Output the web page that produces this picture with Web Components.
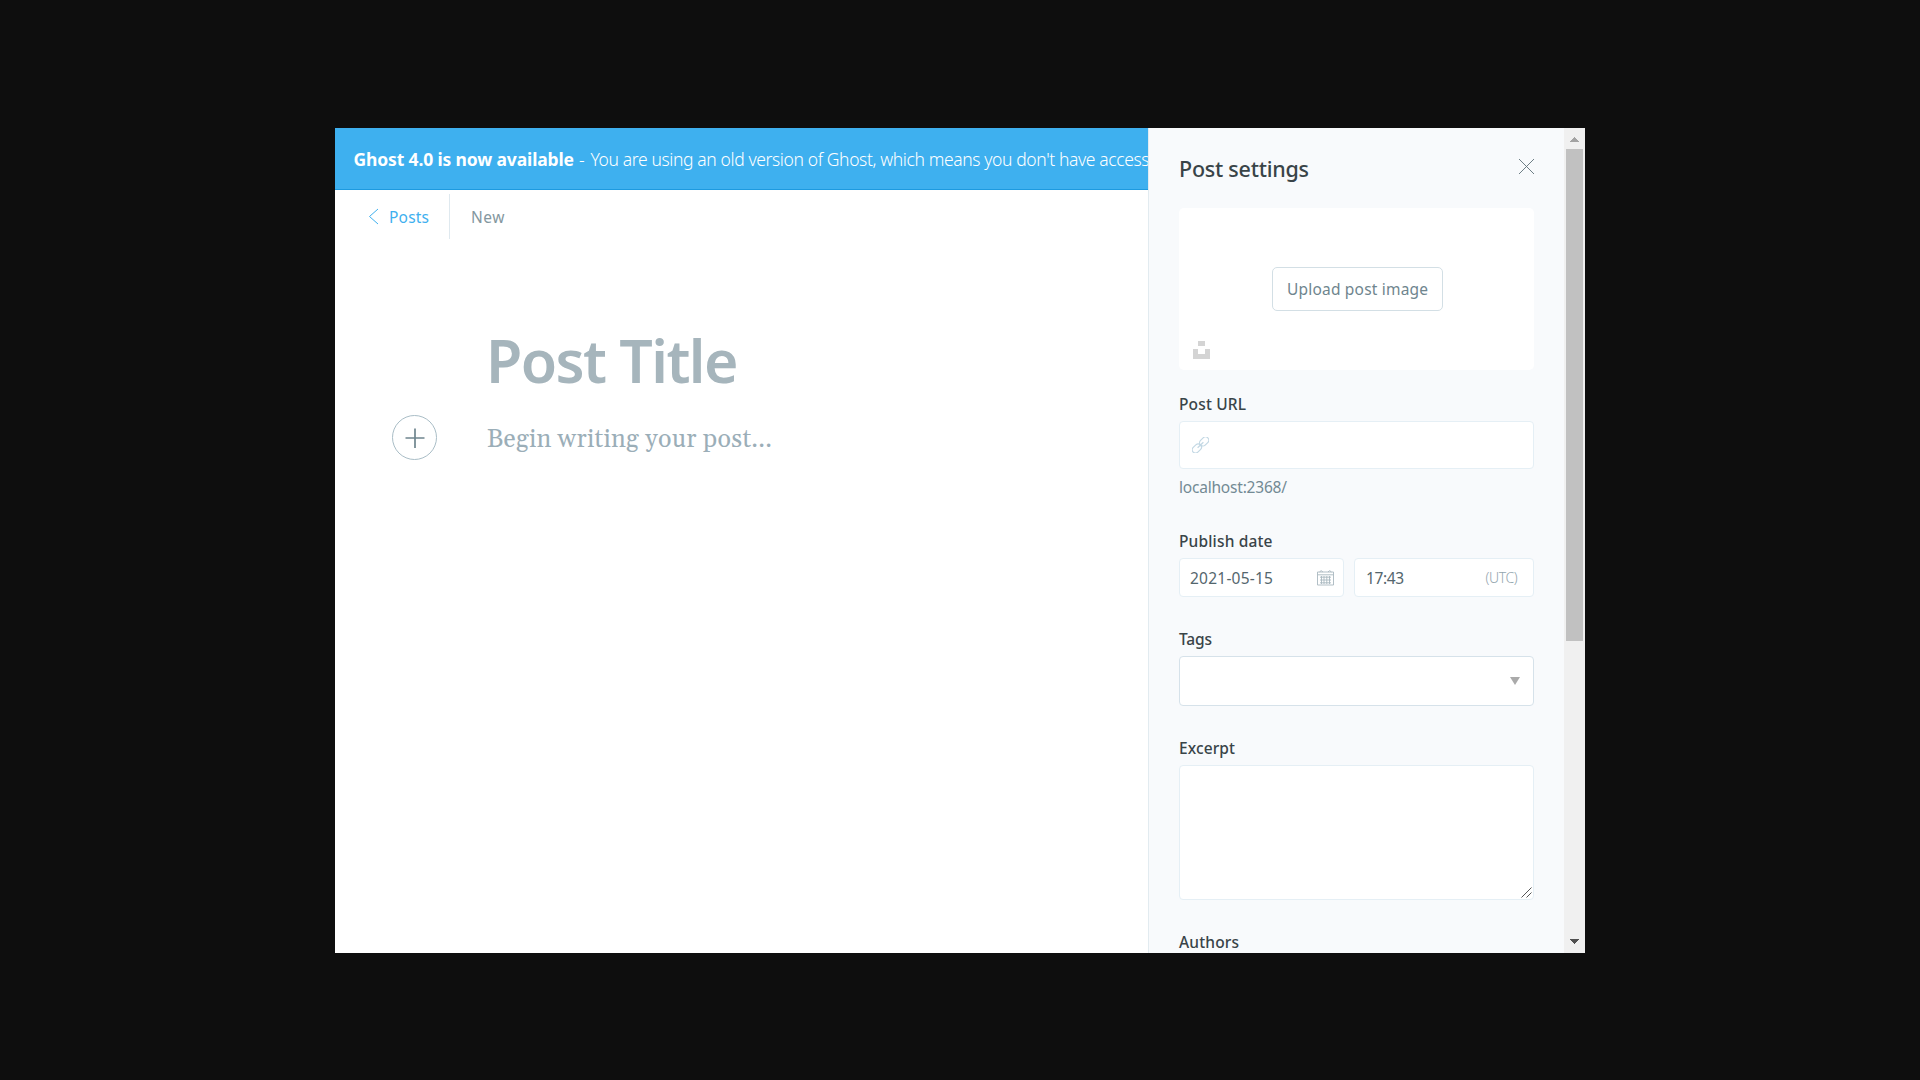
<!DOCTYPE html>
<html lang="en"><head><meta charset="utf-8"><title>New post</title>
<style>
html,body{margin:0;height:100%;background:#0e0e0e;overflow:hidden}
body{font-family:"Noto Sans","Open Sans",sans-serif;color:#394448}
</style></head><body>
<ghost-app></ghost-app>
<script>
const define=(name,html,after)=>{const t=document.createElement('template');t.innerHTML=html;
customElements.define(name,class extends HTMLElement{
  connectedCallback(){ if(this.shadowRoot)return; this.attachShadow({mode:'open'}).append(t.content.cloneNode(true)); if(after)after(this);} });};

/* One line of text, tracked so that it takes the given width. */
define('fit-text',`<style>:host{display:block;white-space:nowrap;flex:none}span{display:inline-block}</style><span><slot></slot></span>`,el=>{
  const s=el.shadowRoot.querySelector('span'),w=+el.getAttribute('width'),n=el.textContent.length;
  if(n>1)s.style.letterSpacing=((w-s.getBoundingClientRect().width)/(n-1)).toFixed(3)+'px';
});

define('notice-bar',`<style>
:host{display:flex;box-sizing:border-box;height:62px;background:#3eb0ef;border-bottom:1px solid #1d9ae0;color:#fff;padding:0 0 0 18.5px;font-size:17.5px;line-height:62px;overflow:hidden}
.b{font-weight:700;width:225.5px}.l{font-weight:300}.d{width:11.5px}
</style><fit-text class="b" width="220.5">Ghost 4.0 is now available</fit-text><fit-text class="l d" width="6">-</fit-text><fit-text class="l" width="559">You are using an old version of Ghost, which means you don't have access</fit-text>`);

define('editor-nav',`<style>
:host{display:flex;height:49px;padding-top:4px;box-sizing:border-box;font-size:15.5px;line-height:46px;color:#8497a0}
.back{display:flex;width:115px;box-sizing:border-box;padding-left:33px;height:45px;border-right:1px solid #dfe9ef;color:#3eb0ef}
svg{margin:14px 10px 0 0;flex:none}.new{margin-left:21px}
</style><div class="back"><svg width="11" height="17" viewBox="0 0 11 17" fill="none" stroke="#3eb0ef" stroke-width="1"><path d="M10 1 1.5 8.5 10 16"/></svg><fit-text width="40">Posts</fit-text></div><fit-text class="new" width="33.5">New</fit-text>`);

define('post-editor',`<style>
:host{display:block;padding-top:81px}
.title{font-size:59px;font-weight:600;line-height:80px;color:#a6b5bc;padding-left:151px}
.row{display:flex;align-items:center;height:46px;margin-top:14px;padding-left:57px;gap:50px}
.body{font:25px/46px Georgia,Gelasio,"Noto Serif","Liberation Serif",serif;color:#9baeb8;padding-top:5px}
svg{flex:none}
</style><fit-text class="title" width="252.5">Post Title</fit-text>
<div class="row"><svg width="45" height="45" viewBox="0 0 45 45" fill="none"><circle cx="22.5" cy="22.5" r="22" stroke="#a9bdc6"/><path d="M13.5 23h19M23 13.5v19.5" stroke="#6f858e" stroke-width="1.7"/></svg><fit-text class="body" width="285">Begin writing your post...</fit-text></div>`);

define('image-uploader',`<style>
:host{display:flex;width:355px;height:162px;background:#fff;border-radius:5px;box-sizing:border-box;padding:59px 0 0 93px;position:relative}
button{all:unset;box-sizing:border-box;width:171px;height:44px;border:1px solid #d3dfe5;border-radius:5px;padding-left:14px;font-size:15.5px;line-height:43px;color:#6f858e}
svg{position:absolute;left:14px;top:133px}
</style><button><fit-text width="141">Upload post image</fit-text></button><svg width="17" height="18" fill="#d4d4d4"><path d="M5 0h7v5H5zM0 8h5v5h7V8h5v10H0z"/></svg>`);

define('form-field',`<style>
:host{display:block}
.c{margin-top:7px;display:flex;gap:10px}
</style><slot name="label"></slot><div class="c"><slot></slot></div>`);

define('input-box',`<style>
:host{display:flex;box-sizing:border-box;background:#fff;border:1px solid #e5eff5;border-radius:4px;width:355px;font-size:15.5px;color:#54666d}
</style><slot></slot>`);

define('settings-panel',`<style>
:host{display:block;box-sizing:border-box;width:416px;height:825px;overflow:hidden;background:#f8fafc;border-left:1px solid #e2ebf0;padding:0 0 0 30px}
header{display:flex;height:80px;width:355px;justify-content:space-between}
.h{font-size:21.5px;font-weight:500;line-height:30px;padding-top:26px}
header svg{margin:31px 0 0}
.label{font-size:15.5px;font-weight:500;line-height:20px;height:20px}
form-field{margin-bottom:32px}
.hint{font-size:15.5px;line-height:20px;color:#738a94;padding-top:8px}
.date{width:165px;height:39px;line-height:38px;padding-left:10px}
.time{width:180px;height:39px;line-height:38px;padding-left:11px}
.utc{font-size:14px;font-weight:300;color:#93a5ae;margin-left:82px}
</style>
<header><fit-text class="h" width="130">Post settings</fit-text><svg width="15" height="15" viewBox="0 0 15 15" stroke="#5d6f77" stroke-width=".9"><path d="M0 0 15 15M15 0 0 15"/></svg></header>
<image-uploader></image-uploader>
<form-field style="margin:24px 0 0"><fit-text class="label" slot="label" width="67">Post URL</fit-text>
<input-box style="height:48px;padding:15px 0 0 12px"><svg width="17" height="16" viewBox="0 0 17 16" fill="none" stroke="#c3d8e4" stroke-width="1.2"><g transform="rotate(-44 8.5 8)"><rect x="-1.7" y="4.7" width="10.2" height="6.6" rx="3.3"/><rect x="8.5" y="4.7" width="10.2" height="6.6" rx="3.3"/><path d="M4.5 8h8"/></g></svg></input-box></form-field>
<fit-text class="hint" width="108">localhost:2368/</fit-text>
<form-field style="margin-top:34px"><fit-text class="label" slot="label" width="93.5">Publish date</fit-text>
<input-box class="date"><fit-text width="83">2021-05-15</fit-text><svg style="margin:11px 0 0 43.5px" width="17" height="16" viewBox="0 0 17 16" fill="none" stroke="#a9b8c0" stroke-width=".9"><path d="M.5 2h16v13H.5zM.5 4.8h16M2.5 1.9q1.7-2.5 3.4 0M11 1.9q1.7-2.5 3.4 0M3 7.2h11M3 10h11M3 12.8h11M4.5 6v8M7 6v8M9.8 6v8M12.5 6v8"/></svg></input-box><input-box class="time"><fit-text width="38">17:43</fit-text><fit-text class="utc" width="32">(UTC)</fit-text></input-box></form-field>
<form-field><fit-text class="label" slot="label" width="33">Tags</fit-text>
<input-box style="height:50px;border-color:#d6e2ea;padding:20px 0 0 330px"><svg width="10" height="8"><path d="M0 0h10L5 8z" fill="#aaa"/></svg></input-box></form-field>
<form-field><fit-text class="label" slot="label" width="56">Excerpt</fit-text>
<input-box style="height:135px;padding:121px 0 0 341px"><svg width="11" height="11" stroke="#555" stroke-width="1"><path d="M.5 10.5 10.5.5M5.5 10.5 10.5 5.5"/></svg></input-box></form-field>
<fit-text class="label" width="60">Authors</fit-text>`);

define('scroll-bar',`<style>
:host{display:flex;flex-direction:column;box-sizing:border-box;width:21px;height:825px;background:#f0f0f0;align-items:center;justify-content:space-between;padding:9px 0}
i{width:17px;height:492px;background:#c1c1c1;margin:7px 0 auto}
svg{flex:none}
</style><svg width="9" height="5"><path d="M4 0h1v1H4zM3 1h3v1H3zM2 2h5v1H2zM1 3h7v1H1zM0 4h9v1H0z" fill="#a3a3a3"/></svg><i></i><svg width="9" height="5"><path d="M0 0h9v1H0zM1 1h7v1H1zM2 2h5v1H2zM3 3h3v1H3zM4 4h1v1H4z" fill="#505050"/></svg>`);

define('ghost-app',`<style>
:host{display:flex;width:1250px;height:825px;margin:128px 0 0 335px;overflow:hidden;background:#fff}
main{width:813px;overflow:hidden;flex:none}
</style><main><notice-bar></notice-bar><editor-nav></editor-nav><post-editor></post-editor></main><settings-panel></settings-panel><scroll-bar></scroll-bar>`);
</script></body></html>
